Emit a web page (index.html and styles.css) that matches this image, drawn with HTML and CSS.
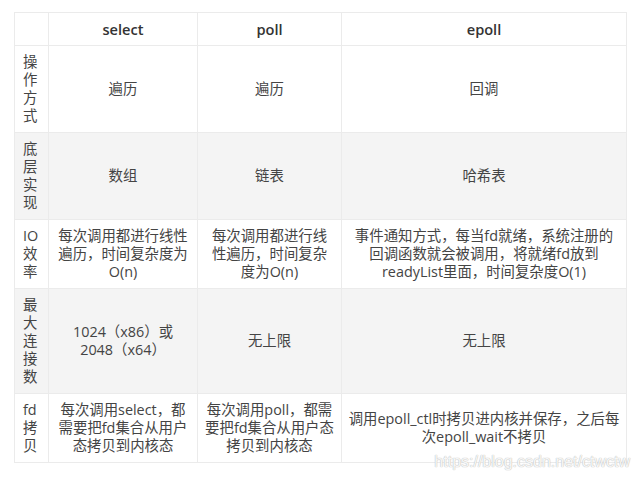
FILE: index.html
```html
<!DOCTYPE html>
<html lang="zh">
<head>
<meta charset="utf-8">
<link rel="stylesheet" href="styles.css">
</head>
<body>
<div class="page">
  <table class="cmp">
    <colgroup>
      <col class="c-label">
      <col class="c-select">
      <col class="c-poll">
      <col class="c-epoll">
    </colgroup>
    <thead>
      <tr>
        <th></th>
        <th>select</th>
        <th>poll</th>
        <th>epoll</th>
      </tr>
    </thead>
    <tbody>
      <tr>
        <td class="label">操<br>作<br>方<br>式</td>
        <td>遍历</td>
        <td>遍历</td>
        <td>回调</td>
      </tr>
      <tr class="alt">
        <td class="label">底<br>层<br>实<br>现</td>
        <td>数组</td>
        <td>链表</td>
        <td>哈希表</td>
      </tr>
      <tr>
        <td class="label">IO<br>效<br>率</td>
        <td>每次调用都进行线性<br>遍历，时间复杂度为<br>O(n)</td>
        <td>每次调用都进行线<br>性遍历，时间复杂<br>度为O(n)</td>
        <td>事件通知方式，每当fd就绪，系统注册的<br>回调函数就会被调用，将就绪fd放到<br>readyList里面，时间复杂度O(1)</td>
      </tr>
      <tr class="alt">
        <td class="label">最<br>大<br>连<br>接<br>数</td>
        <td>1024（x86）或<br>2048（x64）</td>
        <td>无上限</td>
        <td>无上限</td>
      </tr>
      <tr>
        <td class="label">fd<br>拷<br>贝</td>
        <td>每次调用select，都<br>需要把fd集合从用户<br>态拷贝到内核态</td>
        <td>每次调用poll，都需<br>要把fd集合从用户态<br>拷贝到内核态</td>
        <td>调用epoll_ctl时拷贝进内核并保存，之后每<br>次epoll_wait不拷贝</td>
      </tr>
    </tbody>
  </table>
  <div class="watermark">https://blog.csdn.net/ctwctw</div>
</div>
</body>
</html>
```

FILE: styles.css
```css
html, body {
  margin: 0;
  padding: 0;
  background: #ffffff;
}

.page {
  position: relative;
  width: 640px;
  height: 480px;
  padding: 12px 0 0 14px;
  box-sizing: border-box;
  font-family: "Open Sans", "Noto Sans CJK SC", sans-serif;
  color: #444444;
}

.cmp {
  border-collapse: collapse;
  table-layout: fixed;
  width: 612px;
  font-size: 14.4px;
  line-height: 18px;
}

.c-label { width: 34px; }
.c-select { width: 149px; }
.c-poll { width: 144px; }
.c-epoll { width: 285px; }

.cmp th,
.cmp td {
  border: 1px solid #ebebeb;
  padding: 7px 0;
  text-align: center;
  vertical-align: middle;
  white-space: nowrap;
}

.cmp th {
  font-weight: 600;
  color: #333333;
  font-size: 14.6px;
}

.cmp td.label {
  text-align: left;
  padding-left: 8px;
}

.cmp tr.alt td {
  background: #f4f4f4;
}

.watermark {
  position: absolute;
  right: 10px;
  bottom: 9px;
  font-family: "Liberation Sans", Arial, sans-serif;
  font-size: 16px;
  color: rgba(255, 255, 255, 0.9);
  text-shadow: 0 0 1px #b8b8b8, 0 0 1px #c4c4c4;
}
```
